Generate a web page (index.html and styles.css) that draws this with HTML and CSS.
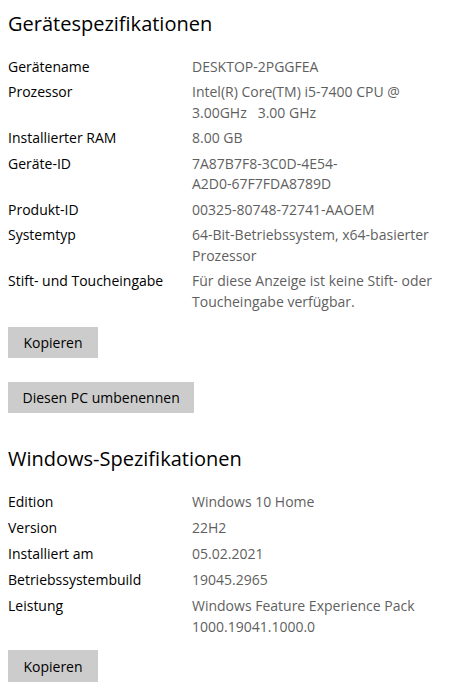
FILE: index.html
```html
<!DOCTYPE html>
<html lang="de">
<head>
<meta charset="utf-8">
<link rel="stylesheet" href="styles.css">
</head>
<body>
<section class="section first">
  <h2 class="title">Gerätespezifikationen</h2>
  <dl class="specs">
    <div class="row"><dt>Gerätename</dt><dd>DESKTOP-2PGGFEA</dd></div>
    <div class="row"><dt>Prozessor</dt><dd>Intel(R) Core(TM) i5-7400 CPU @<br>3.00GHz&nbsp;&nbsp; 3.00 GHz</dd></div>
    <div class="row"><dt>Installierter RAM</dt><dd>8.00 GB</dd></div>
    <div class="row"><dt>Geräte-ID</dt><dd>7A87B7F8-3C0D-4E54-<br>A2D0-67F7FDA8789D</dd></div>
    <div class="row"><dt>Produkt-ID</dt><dd>00325-80748-72741-AAOEM</dd></div>
    <div class="row"><dt>Systemtyp</dt><dd>64-Bit-Betriebssystem, x64-basierter<br>Prozessor</dd></div>
    <div class="row"><dt>Stift- und Toucheingabe</dt><dd>Für diese Anzeige ist keine Stift- oder<br>Toucheingabe verfügbar.</dd></div>
  </dl>
  <button class="btn">Kopieren</button>
  <button class="btn">Diesen PC umbenennen</button>
</section>
<section class="section second">
  <h2 class="title">Windows-Spezifikationen</h2>
  <dl class="specs">
    <div class="row"><dt>Edition</dt><dd>Windows 10 Home</dd></div>
    <div class="row"><dt>Version</dt><dd>22H2</dd></div>
    <div class="row"><dt>Installiert am</dt><dd>05.02.2021</dd></div>
    <div class="row"><dt>Betriebssystembuild</dt><dd>19045.2965</dd></div>
    <div class="row"><dt>Leistung</dt><dd>Windows Feature Experience Pack<br>1000.19041.1000.0</dd></div>
  </dl>
  <button class="btn">Kopieren</button>
</section>
</body>
</html>
```
FILE: styles.css
```css
html, body {
  margin: 0;
  padding: 0;
  background: #ffffff;
}
body {
  font-family: "Open Sans", "Noto Sans", sans-serif;
  font-size: 14px;
  color: #000000;
  padding: 0 8px;
}
.section {
  display: flex;
  flex-direction: column;
  align-items: flex-start;
}
.title {
  margin: 10px 0 0 0;
  font-size: 20px;
  font-weight: 400;
  line-height: 28px;
}
.specs {
  margin: 18.5px 0 0 0;
  display: flex;
  flex-direction: column;
  gap: 5px;
}
.row {
  display: grid;
  grid-template-columns: 184px 1fr;
  line-height: 21px;
}
.first .row {
  line-height: 20.5px;
}
.row dt, .row dd {
  margin: 0;
}
.row dd {
  color: #5f5f5f;
}
.btn {
  margin-top: 15px;
  font: inherit;
  color: #000;
  background: #cccccc;
  border: none;
  height: 31px;
  min-width: 90px;
  padding: 0 14.5px;
  text-align: center;
}
.btn + .btn {
  margin-top: 24px;
}
.second .title {
  margin-top: 31.5px;
}
.second .specs {
  margin-top: 18.5px;
}
.second .btn {
  margin-top: 13px;
  height: 32px;
}
```
